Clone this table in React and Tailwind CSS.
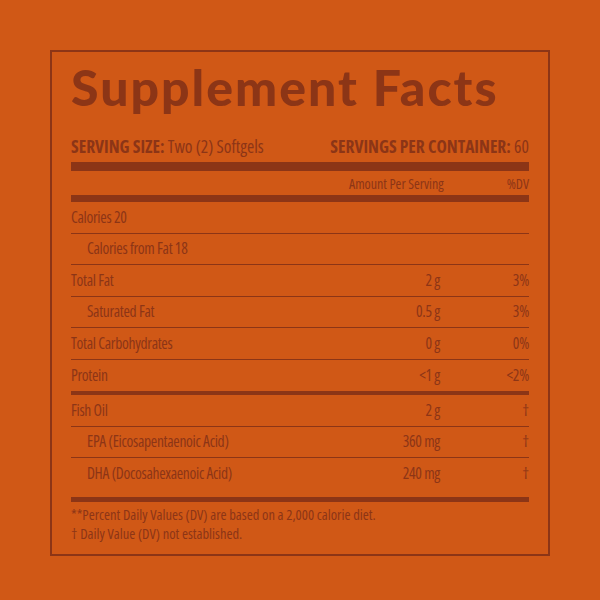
import React from "react";

const rows = [
  { label: "Calories 20" },
  { label: "Calories from Fat 18", sub: true },
  { label: "Total Fat", amount: "2 g", dv: "3%" },
  { label: "Saturated Fat", sub: true, amount: "0.5 g", dv: "3%" },
  { label: "Total Carbohydrates", amount: "0 g", dv: "0%" },
  { label: "Protein", amount: "<1 g", dv: "<2%", last: true },
];

const oils = [
  { label: "Fish Oil", amount: "2 g", dv: "†" },
  { label: "EPA (Eicosapentaenoic Acid)", sub: true, amount: "360 mg", dv: "†" },
  { label: "DHA (Docosahexaenoic Acid)", sub: true, amount: "240 mg", dv: "†", last: true },
];

const Row = ({ label, sub, amount, dv, last }) => (
  <div
    className={
      "flex items-center h-[31.5px] text-[15.5px] tracking-[-0.3px] " +
      (last ? "" : "border-b border-[#8c3516]")
    }
  >
    <span className={"flex-1 " + (sub ? "pl-4" : "")}>{label}</span>
    <span className="w-[120px] text-right">{amount}</span>
    <span className="w-[89px] text-right">{dv}</span>
  </div>
);

export default function App() {
  return (
    <div className="w-[600px] h-[600px] bg-[#d05816] pt-[50px] px-[50px] text-[#8c3516]">
      <div className="border-2 border-[#8c3516] h-[506px] px-[19px] font-['Open_Sans',sans-serif] font-stretch-condensed font-medium">
        {/* title */}
        <h1 className="font-['Lato',sans-serif] font-stretch-normal text-[50px] font-black leading-none pt-[10px] tracking-[2px]">
          Supplement Facts
        </h1>

        {/* serving info */}
        <div className="flex justify-between mt-[24px] text-[17.5px] leading-[20px] whitespace-nowrap">
          <span>
            <b>SERVING SIZE:</b> Two (2) Softgels
          </span>
          <span>
            <b>SERVINGS PER CONTAINER:</b> 60
          </span>
        </div>
        <div className="h-[9px] bg-[#8c3516] mt-[6px]" />

        <div className="flex items-center justify-end h-[24px] text-[14px]">
          <span className="mr-[63px]">Amount Per Serving</span>
          <span>%DV</span>
        </div>
        <div className="h-[7px] bg-[#8c3516]" />

        {rows.map((r) => (
          <Row key={r.label} {...r} />
        ))}
        <div className="h-[4px] bg-[#8c3516]" />

        {oils.map((r) => (
          <Row key={r.label} {...r} />
        ))}
        <div className="h-[5px] bg-[#8c3516] mt-[7px]" />

        {/* footnotes */}
        <div className="text-[14.5px] leading-[19px] mt-[3px]">
          <p>**Percent Daily Values (DV) are based on a 2,000 calorie diet.</p>
          <p>† Daily Value (DV) not established.</p>
        </div>
      </div>
    </div>
  );
}
